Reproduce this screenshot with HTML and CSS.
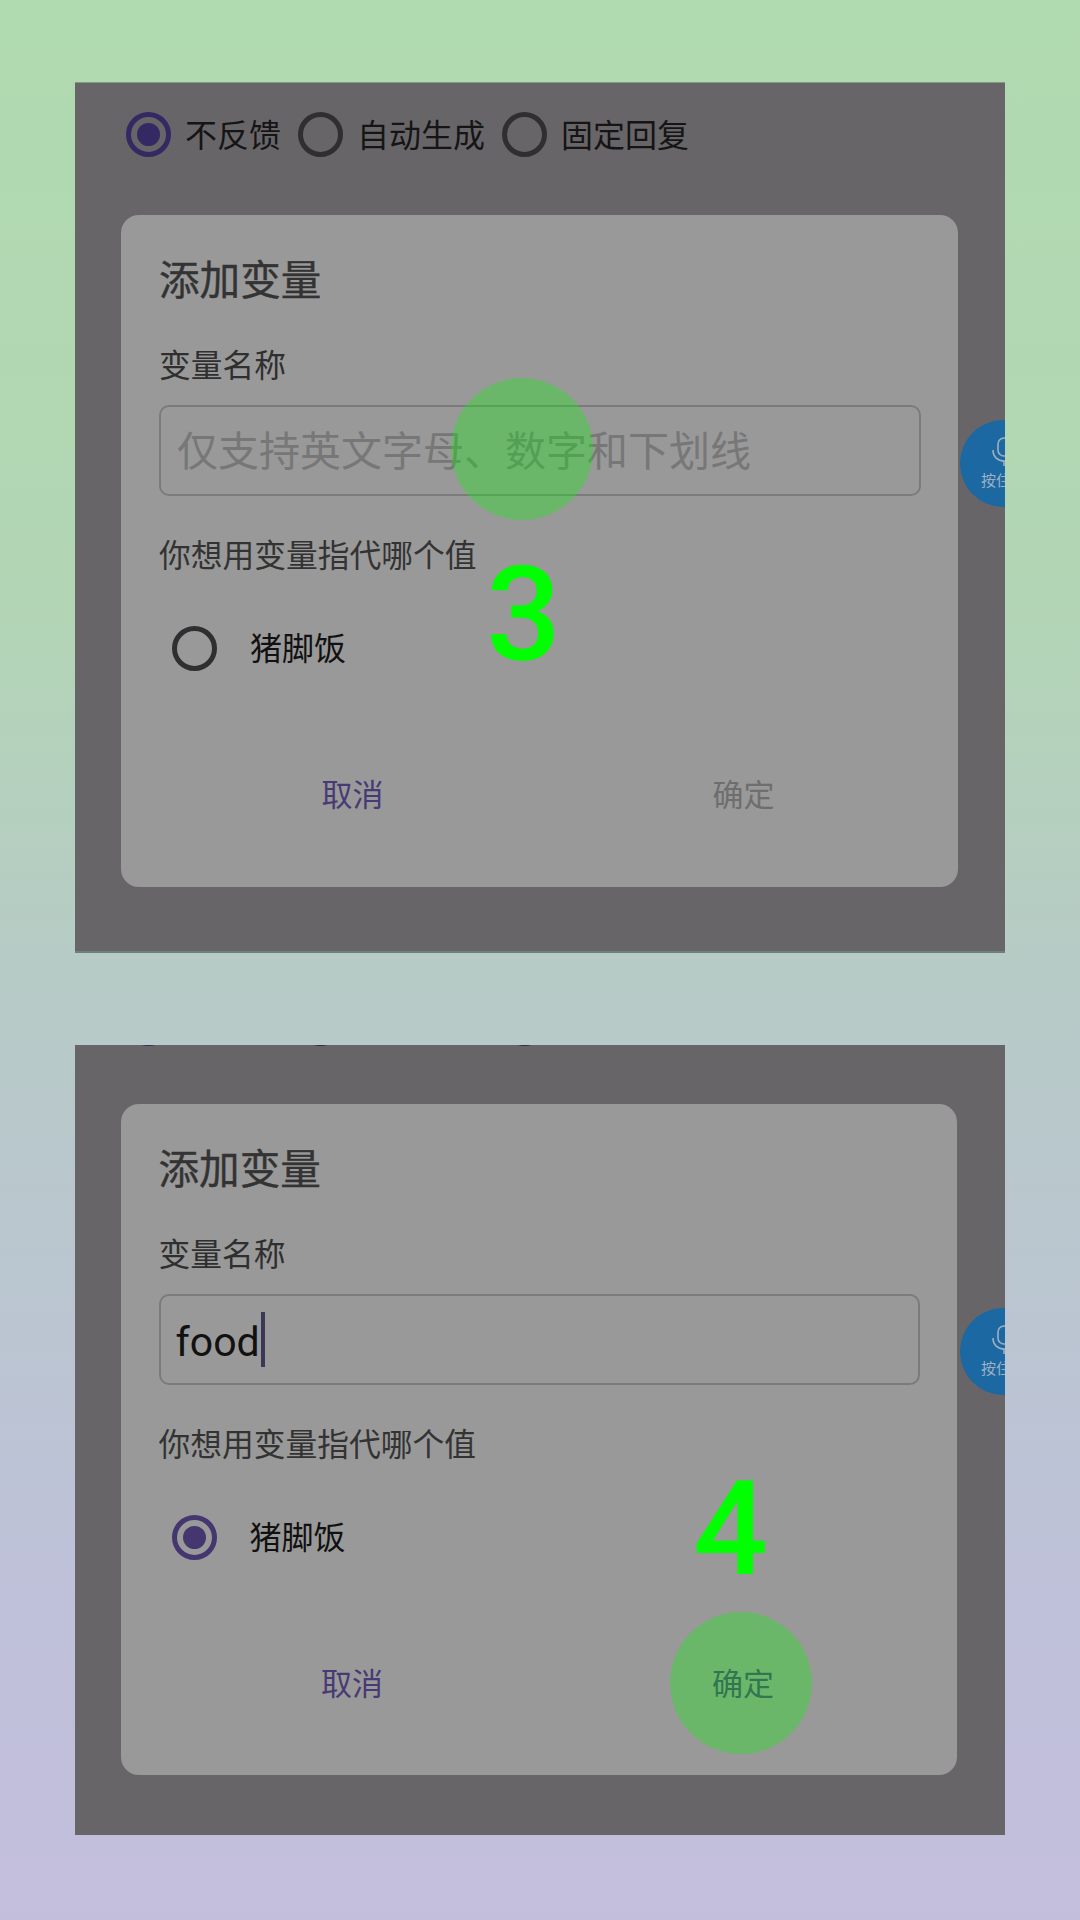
FILE: index.html
```html
<!DOCTYPE html>
<html lang="zh-CN">
<head>
<meta charset="utf-8">
<title>添加变量</title>
<link rel="stylesheet" href="styles.css">
</head>
<body>
<section class="panel panel-one">
  <div class="feedback">
    <span class="radio radio-on"></span><span class="feedback-text">不反馈</span>
    <span class="radio"></span><span class="feedback-text">自动生成</span>
    <span class="radio"></span><span class="feedback-text">固定回复</span>
  </div>
  <div class="dialog">
    <h2 class="title">添加变量</h2>
    <div class="label">变量名称</div>
    <div class="field"><span class="placeholder">仅支持英文字母、数字和下划线</span></div>
    <div class="hint">你想用变量指代哪个值</div>
    <div class="option"><span class="radio"></span><span class="option-text">猪脚饭</span></div>
    <div class="actions"><span class="btn btn-cancel">取消</span><span class="btn btn-ok">确定</span></div>
  </div>
  <div class="fab">
    <svg class="mic" viewBox="0 0 24 30" width="24" height="30" fill="none" stroke="#9fb0be" stroke-width="1.6"><rect x="6" y="1" width="12" height="18" rx="6"/><path d="M1 13c0 7 5 11 11 11s11-4 11-11M12 24v5"/></svg>
    <span class="fab-text">按住说</span>
  </div>
  <div class="tap"></div>
  <div class="step">3</div>
</section>
<section class="panel panel-two">
  <div class="feedback">
    <span class="radio radio-on"></span><span class="gap gap-short"></span>
    <span class="radio"></span><span class="gap gap-long"></span>
    <span class="radio"></span>
  </div>
  <div class="dialog">
    <h2 class="title">添加变量</h2>
    <div class="label">变量名称</div>
    <div class="field"><span class="typed">food</span><span class="caret"></span></div>
    <div class="hint">你想用变量指代哪个值</div>
    <div class="option"><span class="radio radio-on"></span><span class="option-text">猪脚饭</span></div>
    <div class="actions"><span class="btn btn-cancel">取消</span><span class="btn btn-cancel">确定</span></div>
  </div>
  <div class="fab">
    <svg class="mic" viewBox="0 0 24 30" width="24" height="30" fill="none" stroke="#9fb0be" stroke-width="1.6"><rect x="6" y="1" width="12" height="18" rx="6"/><path d="M1 13c0 7 5 11 11 11s11-4 11-11M12 24v5"/></svg>
    <span class="fab-text">按住说</span>
  </div>
  <div class="tap"></div>
  <div class="step">4</div>
</section>
</body>
</html>
```
FILE: styles.css
```css
* { box-sizing: border-box; }
html, body { margin: 0; height: 1920px; }
body {
  width: 1080px;
  padding-top: 82px;
  overflow: hidden;
  background: linear-gradient(180deg, #b0dab0 0%, #b2d6b4 30%, #b7cac7 52%, #bbc4d3 72%, #bfc0da 85%, #c3bedc 100%);
  font-family: "Noto Sans CJK SC", "Noto Sans", sans-serif;
  color: #2f2f2f;
}
.panel {
  position: relative;
  width: 930px;
  margin-left: 75px;
  overflow: hidden;
  background: #676568;
}
.panel-one { height: 871px; padding-top: 30px; box-shadow: inset 0 1px 0 #7f9a7f, inset 0 -2px 0 #6f7f7c; }
.panel-two { height: 790px; margin-top: 92px; padding-top: 0; }
.panel-two .feedback { margin-top: -44px; }
.feedback {
  display: flex;
  align-items: center;
  height: 45px;
  margin-left: 51px;
  font-size: 32px;
  line-height: 44px;
  color: #151515;
}
.feedback-text { margin-left: 14px; margin-right: 17px; padding-bottom: 4px; }
.gap { flex: none; }
.gap-short { width: 127px; }
.gap-long { width: 159px; }
.radio {
  flex: none;
  display: flex;
  align-items: center;
  justify-content: center;
  width: 45px;
  height: 45px;
  border: 5px solid #2f2f31;
  border-radius: 50%;
}
.radio-on { border-color: #45366f; }
.radio-on::after {
  content: "";
  width: 23px;
  height: 23px;
  border-radius: 50%;
  background: #45366f;
}
.feedback .radio-on { border-color: #352963; }
.feedback .radio-on::after { background: #352963; }
.dialog {
  display: flex;
  flex-direction: column;
  width: 837px;
  height: 672px;
  margin: 58px 0 0 46px;
  padding: 38px 37px 0 38px;
  border-radius: 18px;
  background: #999999;
}
.panel-two .dialog { width: 836px; height: 671px; margin-top: 58px; margin-left: 45.5px; }
.title { margin: 0; font-size: 40.6px; line-height: 50px; font-weight: 400; color: #333; -webkit-text-stroke: 0.4px #333; }
.label { margin-top: 38px; font-size: 31.75px; line-height: 44px; color: #2f2f2f; }
.field {
  display: flex;
  align-items: center;
  height: 91px;
  margin-top: 20px;
  padding-left: 16px;
  border: 2px solid #7b7b7b;
  border-radius: 10px;
}
.placeholder { padding-bottom: 6px; font-size: 41px; line-height: 50px; color: #777; white-space: nowrap; }
.typed { margin-left: -1px; padding-top: 4px; font-family: Roboto, sans-serif; font-size: 41px; line-height: 50px; color: #111; }
.caret { width: 4px; height: 55px; margin-left: 1px; background: #3b3757; }
.hint { margin-top: 35px; font-size: 31.75px; line-height: 44px; color: #333; }
.option { display: flex; align-items: center; height: 45px; margin: 51px 0 0 13px; }
.option-text { margin-left: 33px; padding-bottom: 5px; font-size: 32px; line-height: 44px; color: #111; }
.actions { display: flex; margin: 100px 0 0 -2px; }
.btn { flex: none; width: 391px; text-align: center; font-size: 31px; line-height: 44px; }
.btn-cancel { color: #483a74; }
.btn-ok { color: #6e6e6e; }
.fab {
  position: absolute;
  left: 885px;
  width: 87px;
  height: 87px;
  display: flex;
  flex-direction: column;
  align-items: center;
  overflow: hidden;
  padding-top: 17px;
  border-radius: 50%;
  background: #1c68a3;
}
.panel-one .fab { top: 338px; }
.panel-two .fab { top: 263px; }
.mic { flex: none; }
.fab-text { margin-top: 3px; font-size: 15px; line-height: 20px; color: #9fb0be; white-space: nowrap; }
.tap {
  position: absolute;
  width: 142px;
  height: 142px;
  border-radius: 50%;
  background: rgba(0, 255, 0, 0.3);
}
.panel-one .tap { left: 376px; top: 296px; }
.panel-two .tap { left: 595px; top: 567px; }
.step {
  position: absolute;
  font-family: Roboto, sans-serif;
  font-weight: 500;
  font-size: 132px;
  line-height: 132px;
  color: #00ff00;
}
.panel-one .step { left: 411px; top: 467px; }
.panel-two .step { left: 618px; top: 418px; }
```
